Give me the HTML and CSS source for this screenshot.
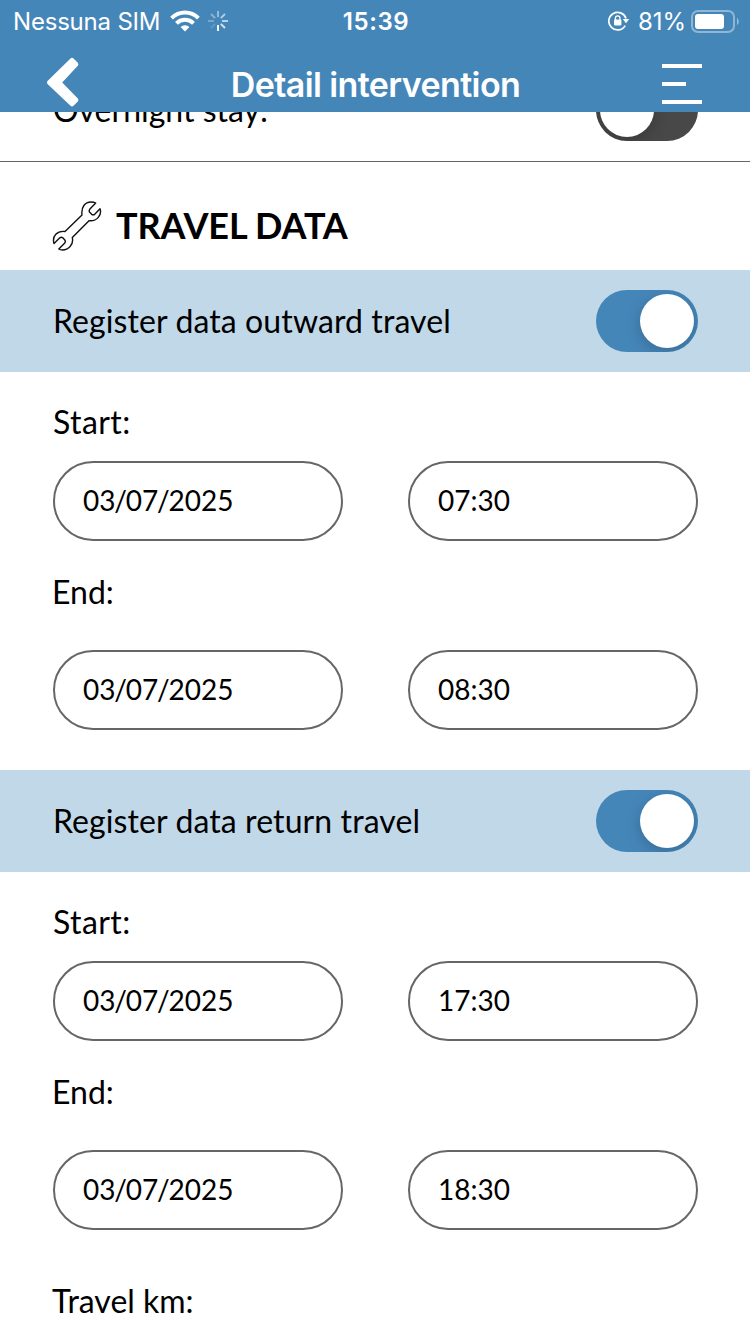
FILE: index.html
```html
<!DOCTYPE html>
<html lang="en">
<head>
<meta charset="utf-8">
<title>Detail intervention</title>
<link rel="stylesheet" href="styles.css">
</head>
<body>
<div class="app">
	<div class="header">
		<div class="statusBar">
			<div class="carrier">
				<span class="carrierName">Nessuna SIM</span>
				<svg class="wifi" width="30" height="22" viewBox="0 0 30 22">
					<g fill="none" stroke="#fff" stroke-width="4">
						<path d="M1.6 8.1a19 19 0 0 1 26.8 0"/>
						<path d="M6.5 13.3a12 12 0 0 1 17 0"/>
					</g>
					<path d="M15 21.5l-4.4-4.4a6.2 6.2 0 0 1 8.8 0z" fill="#fff"/>
				</svg>
				<svg class="spinner" width="20" height="20" viewBox="0 0 20 20">
					<g stroke="#fff" stroke-width="1.8">
						<path d="M10 0v6" opacity=".5"/>
						<path d="M17 3l-4.2 4.2" opacity=".6"/>
						<path d="M20 10h-6" opacity=".7"/>
						<path d="M17 17l-4.2-4.2" opacity=".8"/>
						<path d="M10 20v-6"/>
						<path d="M3 17l4.2-4.2" opacity=".15"/>
						<path d="M0 10h6" opacity=".3"/>
						<path d="M3 3l4.2 4.2" opacity=".4"/>
					</g>
				</svg>
			</div>
			<span class="time">15:39</span>
			<div class="power">
				<svg class="lock" width="22" height="20" viewBox="0 0 22 20">
					<path d="M17.2 14.6A8.8 8.8 0 1 1 18 7.5" fill="none" stroke="#fff" stroke-width="1.7"/>
					<path d="M14.8 8h6.4L18 12.3z" fill="#fff"/>
					<rect x="6" y="8.6" width="7.4" height="5.8" rx=".8" fill="#fff"/>
					<path d="M7.4 9V7.2a2.3 2.3 0 0 1 4.6 0V9" fill="none" stroke="#fff" stroke-width="1.3"/>
				</svg>
				<span class="percent">81%</span>
				<svg class="battery" width="48" height="23" viewBox="0 0 48 23">
					<rect x="1" y="1" width="42" height="21" rx="6" fill="none" stroke="#fff" stroke-width="2" opacity=".4"/>
					<rect x="4" y="4" width="29" height="15" rx="3" fill="#fff"/>
					<path d="M46 8c2.3 1 2.3 6 0 7z" fill="#fff" opacity=".45"/>
				</svg>
			</div>
		</div>
		<div class="navBar">
			<svg class="back" width="34" height="52" viewBox="0 0 34 52">
				<path d="M24.5 1.5q1.5-1.3 3 0l4.3 4.3q1.3 1.5 0 3L16.2 25.5l15.6 16q1.3 1.5 0 3l-4.3 4.3q-1.5 1.5-3 0L1.5 27q-1.4-1.5 0-3z" fill="#fff"/>
			</svg>
			<h1>Detail intervention</h1>
			<div class="menu"><i></i><i class="short"></i><i></i></div>
		</div>
	</div>
	<div class="content">
		<div class="option overnight">
			<span>Overnight stay:</span>
			<div class="switch"></div>
		</div>
		<div class="sectionTitle">
			<svg width="50" height="50" viewBox="-1 -1 50 50">
				<path d="M29 13C28 5 32 0 38 0q3 0 4.7 1l-6 6.3q-1 1.7 0 3l2 2q1.5 1 3 0l5.3-5.5c2.2 6-3 12.8-11 11.9L19.3 35.5C21 43 15 48 9.5 48Q7 48 5.8 47l6-6q1-1.7 0-3l-2-2.2q-1.5-1-3 0L1 41.5C-1.3 34 4.5 28.5 12 29.5z" fill="none" stroke="#111" stroke-width="1.4" stroke-linejoin="round"/>
			</svg>
			<h2>TRAVEL DATA</h2>
		</div>
		<div class="option band">
			<span>Register data outward travel</span>
			<div class="switch on"></div>
		</div>
		<div class="travel">
			<div class="label start">Start:</div>
			<div class="fields">
				<div class="field">03<i>/</i>07<i>/</i>2025</div>
				<div class="field">07:30</div>
			</div>
			<div class="label end">End:</div>
			<div class="fields">
				<div class="field">03<i>/</i>07<i>/</i>2025</div>
				<div class="field">08:30</div>
			</div>
		</div>
		<div class="option band">
			<span>Register data return travel</span>
			<div class="switch on"></div>
		</div>
		<div class="travel">
			<div class="label start">Start:</div>
			<div class="fields">
				<div class="field">03<i>/</i>07<i>/</i>2025</div>
				<div class="field">17:30</div>
			</div>
			<div class="label end">End:</div>
			<div class="fields">
				<div class="field">03<i>/</i>07<i>/</i>2025</div>
				<div class="field">18:30</div>
			</div>
		</div>
		<div class="label km">Travel km:</div>
	</div>
</div>
</body>
</html>
```
FILE: styles.css
```css
*{
	box-sizing:border-box;
}
body{
	margin:0;
	background-color:#fff;
	color:#000;
	font-family:Lato, sans-serif;
	font-size:32px;
}
.app{
	height:1334px;
	overflow:hidden;
}
h1,h2{
	margin:0;
}
svg{
	display:block;
	flex:none;
}

/* header */
.header{
	height:112px;
	background-color:#4586b9;
	color:#fff;
	font-family:Inter, sans-serif;
}
.statusBar{
	display:grid;
	grid-template-columns:1fr auto 1fr;
	height:40px;
	padding:0 11px 0 13px;
	align-items:center;
	font-size:24px;
	line-height:40px;
}
.carrier,.power{
	display:flex;
	align-items:center;
}
.carrierName{
	width:147px;
	padding-top:2px;
	letter-spacing:-.2px;
	white-space:nowrap;
}
.wifi{
	margin-left:10px;
}
.spinner{
	margin-left:8px;
}
.time{
	padding-top:2px;
	font-weight:600;
	letter-spacing:.6px;
}
.power{
	justify-content:flex-end;
}
.lock{
	margin-right:-1px;
}
.percent{
	margin:0 6px 0 9px;
	padding-top:2px;
	width:47px;
	white-space:nowrap;
	letter-spacing:-.1px;
}
.navBar{
	display:flex;
	justify-content:space-between;
	height:72px;
	padding:17px 48px 0 46px;
}
.navBar h1{
	padding-left:9px;
	font-size:34px;
	font-weight:600;
	line-height:56px;
	letter-spacing:-.6px;
	white-space:nowrap;
}
.menu{
	display:flex;
	flex-direction:column;
	justify-content:space-between;
	width:40px;
	height:40px;
	margin-top:7px;
}
.menu i{
	height:4px;
	background-color:#fff;
}
.menu .short{
	width:24px;
}

/* rows with a switch */
.option{
	display:flex;
	justify-content:space-between;
	align-items:center;
	height:102px;
	padding:0 52px 0 53px;
}
.overnight{
	height:50px;
	align-items:flex-end;
	overflow:hidden;
	border-bottom:1px solid #666;
	padding-bottom:20px;
}
.overnight span{
	line-height:62px;
}
.band{
	background-color:#c0d8e7;
}
.band span{
	padding-bottom:2px;
	letter-spacing:.1px;
}
.switch{
	display:flex;
	flex:none;
	width:102px;
	height:62px;
	padding:4px;
	border-radius:31px;
	background-color:#484848;
	overflow:hidden;
}
.switch:before{
	content:"";
	width:54px;
	height:54px;
	border-radius:50%;
	background-color:#fff;
	box-shadow:0 4px 16px rgba(0,0,0,.2);
}
.switch.on{
	justify-content:flex-end;
	background-color:#4586b9;
}

.sectionTitle{
	display:flex;
	align-items:center;
	gap:14px;
	height:108px;
	padding:20px 0 0 52px;
}
.sectionTitle h2{
	font-size:36px;
	font-weight:700;
	line-height:48px;
	letter-spacing:-.1px;
	padding-bottom:2px;
}

/* date and time fields */
.travel{
	height:398px;
	padding:26px 52px 0 53px;
}
.label{
	height:48px;
	line-height:48px;
}
.label.start{
	letter-spacing:.4px;
}
.label.end{
	margin:27px 0 34px -1px;
}
.label.km{
	padding-left:52px;
	margin-top:7px;
}
.fields{
	display:flex;
	justify-content:space-between;
	margin-top:15px;
}
.field{
	width:290px;
	height:80px;
	padding-left:28px;
	border:2px solid #666;
	border-radius:40px;
	font-size:28px;
	line-height:75px;
}
.field i{
	margin:0 -1.2px;
	font-style:normal;
}
```
